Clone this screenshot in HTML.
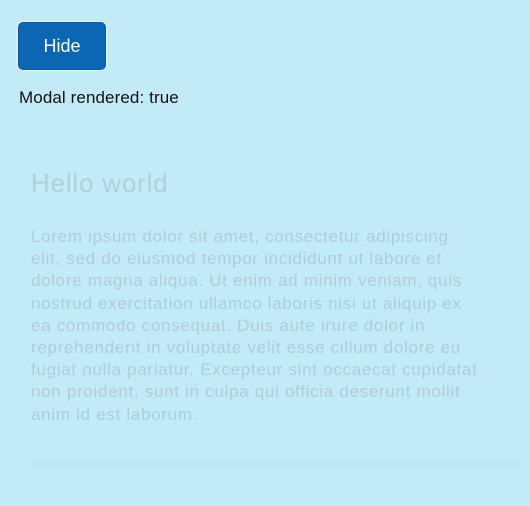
<!DOCTYPE html>
<html><head><style>
html,body{margin:0;padding:0}
body{width:530px;height:506px;background:#c3ebf7;font-family:"Liberation Sans",sans-serif;position:relative;overflow:hidden}
.btn{position:absolute;left:18px;top:22px;width:86px;height:46px;background:#0b66b3;border:1px solid #0a5aa0;border-radius:5px;color:#fff;font-size:18px;line-height:46px;text-align:center;box-shadow:0 0 0 1px #e8f6fb}
.st{position:absolute;left:19px;top:88px;font-size:17px;color:#111;letter-spacing:0.1px}
.bot{position:absolute;left:30px;top:458px;width:490px;height:14px;background:linear-gradient(#c3ebf7,#bee6f1,#c3ebf7)}
h1{position:absolute;left:31px;top:168px;margin:0;font-weight:normal;font-size:26px;letter-spacing:0.8px;color:#b0d0da}
p{position:absolute;left:31px;top:226px;margin:0;white-space:nowrap;font-size:17px;line-height:22.2px;letter-spacing:0.7px;color:#afcdd7}
</style></head><body>
<div class="bot"></div>
<div class="btn">Hide</div>
<div class="st">Modal rendered: true</div>
<h1>Hello world</h1>
<p>Lorem ipsum dolor sit amet, consectetur adipiscing<br>elit, sed do eiusmod tempor incididunt ut labore et<br>dolore magna aliqua. Ut enim ad minim veniam, quis<br>nostrud exercitation ullamco laboris nisi ut aliquip ex<br>ea commodo consequat. Duis aute irure dolor in<br>reprehenderit in voluptate velit esse cillum dolore eu<br>fugiat nulla pariatur. Excepteur sint occaecat cupidatat<br>non proident, sunt in culpa qui officia deserunt mollit<br>anim id est laborum.</p>
</body></html>
